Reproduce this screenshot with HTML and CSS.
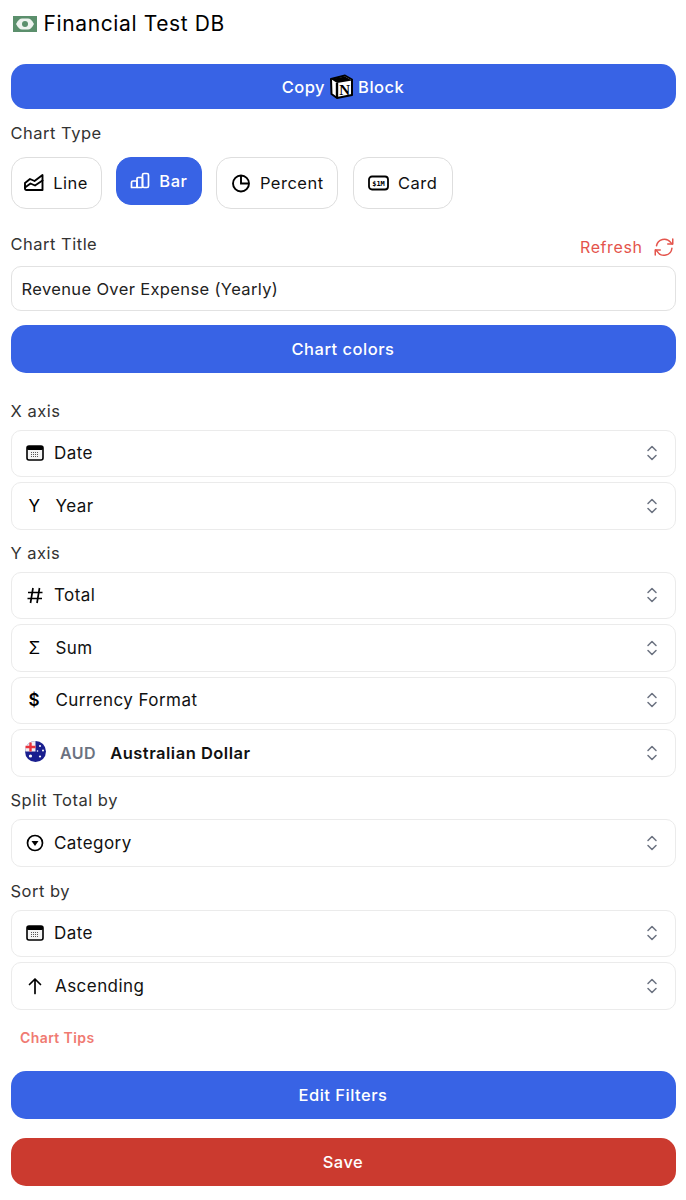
FILE: index.html
```html
<!DOCTYPE html>
<html lang="en">
<head>
    <meta charset="UTF-8">
    <meta name="viewport" content="width=device-width, initial-scale=1.0">
    <title>Financial Test DB</title>
    <link rel="stylesheet" href="styles.css">
</head>
<body>
    <div class="page">
        <header class="db-title">
            <svg class="money-icon" width="24" height="18" viewBox="0 0 24 18">
                <rect x="0" y="1" width="24" height="16" fill="#5b8f6c"/>
                <path d="M3 9 C5 5 7 3.5 9 3.5 H15 C17 3.5 19 5 21 9 C19 13 17 14.5 15 14.5 H9 C7 14.5 5 13 3 9Z" fill="#eef3ef"/>
                <circle cx="12" cy="9" r="3" fill="#5b8f6c"/>
            </svg>
            <span>Financial Test DB</span>
        </header>

        <button class="btn btn-blue btn-copy">
            Copy
            <svg class="notion-icon" width="25" height="25" viewBox="0 0 25 25">
                <path d="M2 5 L16 1.5 L23 5.5 V21 L8 24 L2.5 20Z" fill="#fff" stroke="#000" stroke-width="2" stroke-linejoin="round"/>
                <path d="M2 5 L8 9 L23 6.5 L16 2.5 L2.5 5Z" fill="#000"/>
                <path d="M8 9 V24" fill="none" stroke="#000" stroke-width="2.4"/>
                <text x="15.6" y="20.5" text-anchor="middle" class="notion-n">N</text>
            </svg>
            Block
        </button>

        <div class="label label-type">Chart Type</div>
        <div class="tabs">
            <div class="tab tab-line">
                <svg width="20" height="20" viewBox="0 0 20 20" fill="none" stroke="#000" stroke-width="1.9" stroke-linejoin="round" stroke-linecap="round">
                    <path d="M1 10 L6 6 L10.5 8 L18.5 2 V17 H2.5 Q1 17 1 15.5Z"/>
                    <path d="M1 14.5 L6.5 10.5 L11 12.5 L18.5 7.5"/>
                </svg>
                Line
            </div>
            <div class="tab tab-active tab-bar">
                <svg width="20" height="20" viewBox="0 0 20 20" fill="none" stroke="#fff" stroke-width="1.7" stroke-linejoin="round">
                    <path d="M1.5 16.5 V11.5 Q1.5 10 3 10 H7 V16.5Z"/>
                    <rect x="7" y="6.5" width="5.5" height="10" rx="1"/>
                    <rect x="12.5" y="2.5" width="6" height="14" rx="1.5"/>
                </svg>
                Bar
            </div>
            <div class="tab tab-percent">
                <svg width="20" height="20" viewBox="0 0 20 20" fill="none" stroke="#000" stroke-width="1.9">
                    <circle cx="10" cy="10.5" r="8"/>
                    <path d="M10 2.5 V10.5 H18"/>
                </svg>
                Percent
            </div>
            <div class="tab tab-card">
                <svg width="21" height="16" viewBox="0 0 21 16" fill="none">
                    <rect x="1" y="1.5" width="19" height="13" rx="3" stroke="#000" stroke-width="1.8"/>
                    <text x="10.5" y="10.6" text-anchor="middle" class="card-text">$1M</text>
                </svg>
                Card
            </div>
        </div>

        <div class="title-row">
            <div class="label">Chart Title</div>
            <div class="refresh">
                Refresh
                <svg width="20" height="20" viewBox="0 0 24 24" fill="none" stroke="#e4544c" stroke-width="1.8" stroke-linecap="round" stroke-linejoin="round">
                    <path d="M3 10.5 A9.5 9.5 0 0 1 20 6.5 L22 8.5"/>
                    <path d="M22.5 2.5 V8.5 H16.5"/>
                    <path d="M21.5 13.5 A9.5 9.5 0 0 1 4 17.5 L2 15.5"/>
                    <path d="M1.5 21.5 V15.5 H7.5"/>
                </svg>
            </div>
        </div>
        <div class="text-input">Revenue Over Expense (Yearly)</div>

        <button class="btn btn-blue btn-colors">Chart colors</button>

        <div class="label label-x">X axis</div>
        <div class="select-group">
            <div class="select">
                <svg class="sel-icon" width="18" height="16" viewBox="0 0 18 16"><use href="#cal"/></svg>
                <span>Date</span>
                <svg class="chevrons" width="12" height="18" viewBox="0 0 12 18"><use href="#chev"/></svg>
            </div>
            <div class="select">
                <span class="sel-glyph">Y</span>
                <span>Year</span>
                <svg class="chevrons" width="12" height="18" viewBox="0 0 12 18"><use href="#chev"/></svg>
            </div>
        </div>

        <div class="label label-y">Y axis</div>
        <div class="select-group">
            <div class="select">
                <svg class="sel-icon" width="18" height="18" viewBox="0 0 18 18" fill="none" stroke="#000" stroke-width="1.7">
                    <path d="M7 2 L4.5 17 M13.5 2 L11 17 M2 6.5 H16.5 M1.5 12.5 H16"/>
                </svg>
                <span>Total</span>
                <svg class="chevrons" width="12" height="18" viewBox="0 0 12 18"><use href="#chev"/></svg>
            </div>
            <div class="select">
                <span class="sel-glyph">Σ</span>
                <span>Sum</span>
                <svg class="chevrons" width="12" height="18" viewBox="0 0 12 18"><use href="#chev"/></svg>
            </div>
            <div class="select">
                <span class="sel-glyph sel-bold">$</span>
                <span>Currency Format</span>
                <svg class="chevrons" width="12" height="18" viewBox="0 0 12 18"><use href="#chev"/></svg>
            </div>
            <div class="select">
                <svg class="flag" width="21" height="21" viewBox="0 0 21 21">
                    <circle cx="10.5" cy="10.5" r="10.5" fill="#1a1f8f"/>
                    <path d="M0.5 7.5 A10.5 10.5 0 0 1 10.5 0 V10.5 H0.2Z" fill="#f2eef2"/>
                    <path d="M5.5 1.5 V10.5 M0.5 6 H10.5" stroke="#e8323c" stroke-width="2.4"/>
                    <circle cx="5.5" cy="15" r="1.6" fill="#fff"/>
                    <circle cx="15" cy="5" r="1" fill="#fff"/>
                    <circle cx="18" cy="9.5" r="1" fill="#fff"/>
                    <circle cx="15" cy="15.5" r="1.1" fill="#fff"/>
                    <circle cx="12.5" cy="10" r="0.8" fill="#fff"/>
                </svg>
                <span class="code">AUD</span>
                <span class="currency">Australian Dollar</span>
                <svg class="chevrons" width="12" height="18" viewBox="0 0 12 18"><use href="#chev"/></svg>
            </div>
        </div>

        <div class="label label-split">Split Total by</div>
        <div class="select-group">
            <div class="select">
                <svg class="sel-icon" width="18" height="18" viewBox="0 0 18 18" fill="none">
                    <circle cx="9" cy="9" r="7.5" stroke="#000" stroke-width="1.7"/>
                    <path d="M5.5 7 H12.5 L9 12Z" fill="#000"/>
                </svg>
                <span>Category</span>
                <svg class="chevrons" width="12" height="18" viewBox="0 0 12 18"><use href="#chev"/></svg>
            </div>
        </div>

        <div class="label label-sort">Sort by</div>
        <div class="select-group">
            <div class="select">
                <svg class="sel-icon" width="18" height="16" viewBox="0 0 18 16"><use href="#cal"/></svg>
                <span>Date</span>
                <svg class="chevrons" width="12" height="18" viewBox="0 0 12 18"><use href="#chev"/></svg>
            </div>
            <div class="select">
                <svg class="sel-icon sel-arrow" width="18" height="18" viewBox="0 0 18 18" fill="none" stroke="#000" stroke-width="1.7" stroke-linecap="round" stroke-linejoin="round">
                    <path d="M9 16.5 V2 M3.5 7.5 L9 2 L14.5 7.5"/>
                </svg>
                <span>Ascending</span>
                <svg class="chevrons" width="12" height="18" viewBox="0 0 12 18"><use href="#chev"/></svg>
            </div>
        </div>

        <div class="tips">Chart Tips</div>

        <button class="btn btn-blue btn-filters">Edit Filters</button>
        <button class="btn btn-red">Save</button>
    </div>

    <svg width="0" height="0" class="defs">
        <defs>
            <g id="chev" fill="none" stroke="#6b7280" stroke-width="1.5" stroke-linecap="round" stroke-linejoin="round">
                <path d="M2 6.5 L6 2.5 L10 6.5"/>
                <path d="M2 11.5 L6 15.5 L10 11.5"/>
            </g>
            <g id="cal">
                <rect x="1" y="1" width="16" height="14" rx="2" fill="#f4f4f4" stroke="#000" stroke-width="1.6"/>
                <rect x="1" y="1" width="16" height="4" rx="1.5" fill="#000"/>
                <path d="M5 7.5 H13 M5 9.5 H13 M5 11.5 H13" stroke="#555" stroke-width="1" stroke-dasharray="1 1"/>
            </g>
        </defs>
    </svg>
</body>
</html>
```

FILE: styles.css
```css
* {
    box-sizing: border-box;
}

body {
    margin: 0;
    font-family: Inter, "Liberation Sans", sans-serif;
    background-color: #fff;
    color: #000;
    letter-spacing: 0.6px;
}

.page {
    padding: 0 10.5px;
}

.db-title {
    display: flex;
    align-items: center;
    gap: 7px;
    height: 47px;
    font-size: 21px;
    letter-spacing: 0.62px;
    color: #000;
    padding-left: 2px;
}

.money-icon {
    flex-shrink: 0;
}

.btn {
    display: flex;
    align-items: center;
    justify-content: center;
    width: 100%;
    height: 48px;
    border: none;
    border-radius: 15px;
    color: #fff;
    font-family: inherit;
    font-size: 16.5px;
    font-weight: 500;
    letter-spacing: 0.5px;
    padding: 0;
}

.btn-blue {
    background-color: #3863e5;
}

.btn-red {
    background-color: #cb3a2f;
    margin-top: 19px;
}

.btn-copy {
    height: 45px;
    margin-top: 17px;
    gap: 4px;
}

.notion-icon {
    flex-shrink: 0;
}

.notion-n {
    font-family: "Liberation Serif", serif;
    font-size: 15px;
    font-weight: 700;
    letter-spacing: 0;
    fill: #000;
}

.label {
    font-size: 16.5px;
    letter-spacing: 0.5px;
    color: #333;
    line-height: 20px;
}

.label-type {
    margin-top: 14px;
}

.tabs {
    display: flex;
    align-items: flex-start;
    gap: 14.4px;
    margin-top: 14px;
}

.tab {
    display: flex;
    align-items: center;
    justify-content: center;
    gap: 9px;
    height: 52px;
    border: 1.5px solid #dedede;
    border-radius: 15px;
    font-size: 16.5px;
    letter-spacing: 0.5px;
    color: #111;
}

.tab-line {
    width: 91px;
}

.tab-bar {
    width: 86px;
}

.tab-percent {
    width: 122px;
}

.tab-card {
    width: 100px;
}

.tab-active {
    height: 48px;
    background-color: #3863e5;
    border-color: #3863e5;
    color: #fff;
    font-weight: 500;
}

.card-text {
    font-family: "DejaVu Sans Mono", monospace;
    font-size: 7px;
    font-weight: 700;
    letter-spacing: 0;
    fill: #000;
}

.title-row {
    display: flex;
    justify-content: space-between;
    align-items: flex-end;
    margin-top: 25px;
}

.title-row .label {
    margin-bottom: 12px;
}

.refresh {
    display: flex;
    align-items: center;
    gap: 11px;
    color: #e4544c;
    font-size: 16px;
    line-height: 20px;
    margin-bottom: 9px;
    padding-right: 2px;
}

.text-input {
    display: flex;
    align-items: center;
    height: 45px;
    padding: 0 10px;
    border: 1px solid #e2e2e2;
    border-radius: 10px;
    font-size: 16.5px;
    letter-spacing: 0.36px;
    color: #222;
}

.btn-colors {
    margin-top: 14px;
}

.label-x {
    margin-top: 27.5px;
}

.label-y {
    margin-top: 13px;
}

.label-split {
    margin-top: 13.5px;
}

.label-sort {
    margin-top: 14px;
}

.select-group {
    display: flex;
    flex-direction: column;
    gap: 5px;
    margin-top: 9px;
}

.select {
    display: flex;
    align-items: center;
    height: 47.5px;
    padding: 0 17px 0 14px;
    border: 1.5px solid #ebebeb;
    border-radius: 10px;
    font-size: 17px;
    letter-spacing: 0.45px;
    color: #111;
}

.sel-icon {
    flex-shrink: 0;
    margin-right: 10.5px;
}

.sel-arrow {
    margin-right: 11.5px;
}

.sel-glyph {
    width: 30px;
    flex-shrink: 0;
    padding-left: 3px;
    font-size: 17px;
    color: #000;
}

.sel-bold {
    font-weight: 600;
}

.flag {
    flex-shrink: 0;
    margin-left: -0.5px;
    margin-right: 14px;
    margin-top: -3px;
}

.code {
    margin-right: 14px;
    font-size: 16px;
    letter-spacing: 0.5px;
    color: #6b7280;
    font-weight: 600;
}

.currency {
    font-size: 16.5px;
    letter-spacing: 0.5px;
    font-weight: 600;
}

.chevrons {
    flex-shrink: 0;
    margin-left: auto;
}

.tips {
    margin-top: 19px;
    padding-left: 9.5px;
    font-size: 14px;
    font-weight: 600;
    letter-spacing: 0.4px;
    line-height: 18px;
    color: #f07a72;
}

.btn-filters {
    margin-top: 24px;
}

.defs {
    position: absolute;
}
```
